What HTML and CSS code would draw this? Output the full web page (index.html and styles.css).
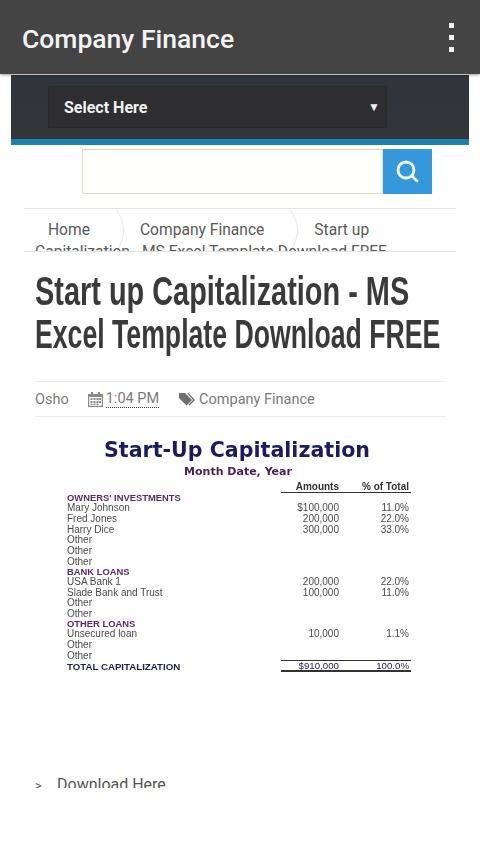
FILE: index.html
```html
<!DOCTYPE html>
<html lang="en">
<head>
    <meta charset="UTF-8">
    <meta name="viewport" content="width=device-width, initial-scale=1.0">
    <title>Company Finance</title>
    <link rel="stylesheet" href="styles.css">
</head>
<body>
    <header class="appbar">
        <h2>Company Finance</h2>
        <div class="menu-dots"><span></span><span></span><span></span></div>
    </header>
    <main class="content">
        <nav class="topnav">
            <div class="select-box">
                <span>Select Here</span>
                <span class="arrow">▼</span>
            </div>
        </nav>
        <form class="search">
            <input type="text" class="search-input">
            <button type="button" class="search-btn">
                <svg width="26" height="26" viewBox="0 0 26 26" fill="none" stroke="#f2f7fb" stroke-width="2.800" stroke-linecap="round">
                    <circle cx="11" cy="11" r="8"/>
                    <path d="M17 17 L22 22"/>
                </svg>
            </button>
        </form>
        <div class="breadcrumb">
            <span class="crumb first">Home</span><svg class="sep" width="14" height="42" viewBox="0 0 14 42" fill="none" stroke="#e6e6e6"><path d="M1 0 Q8 10 9 21 Q8 32 2 42"/></svg><span class="crumb">Company Finance</span><svg class="sep" width="14" height="42" viewBox="0 0 14 42" fill="none" stroke="#e6e6e6"><path d="M1 0 Q8 10 9 21 Q8 32 2 42"/></svg><span class="crumb">Start up</span>
            <div class="crumb-rest">Capitalization - MS Excel Template Download FREE</div>
        </div>
        <h1 class="post-title"><span class="line-one">Start up Capitalization - MS</span><span class="line-two">Excel Template Download FREE</span></h1>
        <div class="post-meta">
            <span class="author">Osho</span>
            <span class="date">
                <svg width="15" height="15" viewBox="0 0 15 15" fill="#8a8a8a"><path d="M3 0h2v2h5V0h2v2h3v13H0V2h3zM1.200 5v8.800h12.600V5z"/><path d="M2.500 6h2v2h-2zM5.500 6h2v2h-2zM8.500 6h2v2h-2zM11 6h2v2h-2zM2.500 9h2v2h-2zM5.500 9h2v2h-2zM8.500 9h2v2h-2zM11 9h2v2h-2zM2.500 11.500h2v1.500h-2zM5.500 11.500h2v1.500h-2zM8.500 11.500h2v1.500h-2z"/></svg>
                <abbr>1:04 PM</abbr>
            </span>
            <span class="tag">
                <svg width="16" height="13" viewBox="0 0 16 13" fill="#6f6f6f"><path d="M0 0h6l7 7-5.500 5.500L0 5z"/><path d="M8 0h1.500l6.500 7-5.500 5.500-1-1L14 7z"/></svg>
                Company Finance
            </span>
        </div>
        <figure class="sheet">
            <div class="sheet-title">Start-Up Capitalization</div>
            <div class="sheet-date">Month Date, Year</div>
            <table class="sheet-table">
                <tr class="head"><td></td><td class="num">Amounts</td><td class="num">% of Total</td></tr>
                <tr class="section"><td>OWNERS' INVESTMENTS</td><td></td><td></td></tr>
                <tr><td>Mary Johnson</td><td class="num">$100,000</td><td class="num">11.0%</td></tr>
                <tr><td>Fred Jones</td><td class="num">200,000</td><td class="num">22.0%</td></tr>
                <tr><td>Harry Dice</td><td class="num">300,000</td><td class="num">33.0%</td></tr>
                <tr><td>Other</td><td></td><td></td></tr>
                <tr><td>Other</td><td></td><td></td></tr>
                <tr><td>Other</td><td></td><td></td></tr>
                <tr class="section"><td>BANK LOANS</td><td></td><td></td></tr>
                <tr><td>USA Bank 1</td><td class="num">200,000</td><td class="num">22.0%</td></tr>
                <tr><td>Slade Bank and Trust</td><td class="num">100,000</td><td class="num">11.0%</td></tr>
                <tr><td>Other</td><td></td><td></td></tr>
                <tr><td>Other</td><td></td><td></td></tr>
                <tr class="section"><td>OTHER LOANS</td><td></td><td></td></tr>
                <tr><td>Unsecured loan</td><td class="num">10,000</td><td class="num">1.1%</td></tr>
                <tr><td>Other</td><td></td><td></td></tr>
                <tr><td>Other</td><td></td><td></td></tr>
                <tr class="total"><td>TOTAL CAPITALIZATION</td><td class="num">$910,000</td><td class="num">100.0%</td></tr>
            </table>
        </figure>
        <div class="download"><span class="chev">&gt;</span>Download Here</div>
    </main>
</body>
</html>
```
FILE: styles.css
```css
body {
    margin: 0;
    background-color: #fff;
    font-family: Roboto, "Liberation Sans", sans-serif;
    color: #555;
}
.appbar {
    height: 74px;
    box-sizing: border-box;
    padding: 3px 26px 0 22px;
    background-color: #444;
    box-shadow: 0 1px 3px rgba(0,0,0,0.4);
    display: flex;
    align-items: center;
    justify-content: space-between;
    position: relative;
    z-index: 2;
}
.appbar h2 {
    margin: 0;
    font-size: 26.500px;
    font-weight: 500;
    color: #f4f4f4;
}
.menu-dots {
    display: flex;
    flex-direction: column;
    gap: 7px;
    margin-top: -3px;
}
.menu-dots span {
    width: 5px;
    height: 5px;
    background-color: #f2f2f2;
}
.content {
    height: 714px;
    overflow: hidden;
}
.topnav {
    margin: 1px 11px 0;
    height: 53px;
    padding-top: 11px;
    background: linear-gradient(to bottom, #2e353b, #33363a);
    border-bottom: 6px solid #1d80ad;
}
.select-box {
    margin-left: 37px;
    width: 339px;
    height: 42px;
    box-sizing: border-box;
    background-color: #2e2e30;
    border: 1px solid #27292b;
    display: flex;
    align-items: center;
    justify-content: space-between;
    padding: 0 6px 0 15px;
    color: #f2f2f2;
    font-size: 16px;
    font-weight: 700;
}
.arrow {
    font-size: 12px;
}
.search {
    display: flex;
    margin: 4px 0 0 82px;
    height: 45px;
}
.search-input {
    width: 301px;
    height: 45px;
    box-sizing: border-box;
    border: 1px solid #e6dfc0;
    border-top-color: #e8d99a;
    background-color: #fffffb;
    padding: 0;
}
.search-btn {
    width: 49px;
    height: 45px;
    border: none;
    padding: 0;
    background-color: #3498db;
    display: flex;
    align-items: center;
    justify-content: center;
}
.breadcrumb {
    margin: 14px 24px 0;
    height: 42px;
    overflow: hidden;
    border-top: 1px solid #e4e4e4;
    border-bottom: 1px solid #e4e4e4;
    font-size: 15.600px;
    color: #5a5a5a;
    white-space: nowrap;
    position: relative;
}
.crumb {
    display: inline-block;
    line-height: 43px;
    vertical-align: top;
    margin-right: 25px;
}
.crumb.first {
    margin-left: 24px;
}
.sep {
    vertical-align: top;
    margin-right: 11px;
}
.crumb-rest {
    position: absolute;
    top: 33px;
    left: 11px;
    line-height: 20px;
}
.post-title {
    margin: 18px 0 0 35px;
    font-family: "Liberation Sans", sans-serif;
    font-weight: 700;
    font-size: 41px;
    line-height: 43px;
    color: #3a3a3a;
}
.post-title span {
    display: block;
    white-space: nowrap;
    transform-origin: left center;
}
.line-one {
    transform: scaleX(0.705);
}
.line-two {
    transform: scaleX(0.65);
}
.post-meta {
    margin: 25px 34px 0 35px;
    height: 34px;
    border-top: 1px solid #efefef;
    border-bottom: 1px solid #efefef;
    display: flex;
    align-items: center;
    font-size: 14.500px;
    color: #7b7b7b;
    white-space: nowrap;
}
.date {
    margin-left: 19px;
    display: flex;
    align-items: center;
    gap: 3px;
}
.date abbr {
    border-bottom: 1px dotted #333;
    line-height: 16px;
}
.tag {
    margin-left: 20px;
    display: flex;
    align-items: center;
    gap: 4px;
}
.sheet {
    margin: 22px 0 0 67px;
    width: 344px;
    height: 232px;
    font-family: "Liberation Sans", sans-serif;
    filter: blur(0.35px);
}
.sheet-title {
    margin-left: 37px;
    font-family: "DejaVu Sans", sans-serif;
    font-weight: 700;
    font-size: 20.600px;
    line-height: 22px;
    color: #1b1b62;
    white-space: nowrap;
}
.sheet-date {
    margin: 4px 0 0 51px;
    width: 240px;
    text-align: center;
    font-family: "DejaVu Sans", sans-serif;
    font-weight: 700;
    font-size: 11px;
    line-height: 13px;
    color: #4b1f52;
}
.sheet-table {
    border-collapse: collapse;
    table-layout: fixed;
    width: 344px;
    margin-top: 3px;
    font-size: 10px;
    line-height: 9px;
    color: #4a4a4a;
}
.sheet-table td {
    padding: 0;
    height: 10.700px;
    white-space: nowrap;
}
.sheet-table td:first-child {
    width: 214px;
}
.sheet-table td:nth-child(2) {
    width: 58px;
}
.sheet-table .num {
    text-align: right;
}
.sheet-table td:last-child {
    padding-right: 2px;
}
.sheet-table .head td {
    font-weight: 700;
    color: #333;
}
.sheet-table .head .num {
    border-bottom: 1px solid #333;
}
.sheet-table .section td {
    height: 9.600px;
    font-size: 9.400px;
    font-weight: 700;
    color: #5b2a66;
}
.sheet-table .total td {
    height: 8px;
    font-size: 9.700px;
    font-weight: 700;
    color: #1f1f4f;
}
.sheet-table .total .num {
    font-weight: 400;
    border-top: 1px solid #333;
    border-bottom: 2px solid #333;
}
.download {
    margin: 103px 0 0 35px;
    font-size: 16px;
    line-height: 22px;
    color: #555;
}
.chev {
    display: inline-block;
    width: 22px;
    font-size: 13px;
}
```
